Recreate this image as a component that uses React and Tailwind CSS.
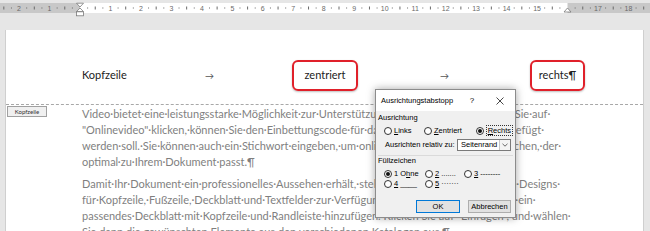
import React from 'react';

// Word ruler: origin (left indent) at x=80, 1 cm ≈ 30.47px
const CM = 30.47;
const ORIGIN = 80;

const para1 = [
  'Video·bietet·eine·leistungsstarke·Möglichkeit·zur·Unterstützung·Ihres·Standpunkts.·Wenn·Sie·auf·',
  '"Onlinevideo"·klicken,·können·Sie·den·Einbettungscode·für·das·Video·einfügen,·das·hinzugefügt·',
  'werden·soll.·Sie·können·auch·ein·Stichwort·eingeben,·um·online·nach·dem·Videoclip·zu·suchen,·der·',
  'optimal·zu·Ihrem·Dokument·passt.¶',
];
const para2 = [
  'Damit·Ihr·Dokument·ein·professionelles·Aussehen·erhält,·stellt·Word·einander·ergänzende·Designs·',
  'für·Kopfzeile,·Fußzeile,·Deckblatt·und·Textfelder·zur·Verfügung.·Beispielsweise·können·Sie·ein·',
  'passendes·Deckblatt·mit·Kopfzeile·und·Randleiste·hinzufügen.·Klicken·Sie·auf·"Einfügen",·und·wählen·',
  'Sie·dann·die·gewünschten·Elemente·aus·den·verschiedenen·Katalogen·aus.¶',
];

function Ruler() {
  const marks = [];
  for (let n = -3; n <= 19; n++) {
    const x = ORIGIN + n * CM;
    if (n !== 0 && n !== 16) {
      marks.push(<text key={'n' + n} x={x} y={10.6} textAnchor="middle">{Math.abs(n)}</text>);
    }
    marks.push(<rect key={'a' + n} x={x + CM * 0.25 - 0.5} y={7.5} width={1} height={1} />);
    marks.push(<rect key={'b' + n} x={x + CM * 0.5 - 0.5} y={6.5} width={1} height={3} />);
    marks.push(<rect key={'c' + n} x={x + CM * 0.75 - 0.5} y={7.5} width={1} height={1} />);
  }
  return (
    <svg width="650" height="18" viewBox="0 0 650 18" className="block">
      <rect x="0" y="3" width="650" height="10" fill="#fff" />
      <rect x="0" y="3" width={ORIGIN} height="10" fill="#c8c8c8" />
      <rect x={ORIGIN + 16 * CM} y="3" width="100" height="10" fill="#c8c8c8" />
      <g fill="#6a6a6a" fontSize="7" fontFamily="'Liberation Sans', sans-serif">{marks}</g>
      {/* left indent markers */}
      <g fill="#fff" stroke="#7a7a7a" strokeWidth="0.8">
        <path d="M76.5 3.2 H83.5 L80 7 Z" />
        <path d="M80 8 L83.5 11.6 H76.5 Z" />
        <rect x="76.5" y="11.8" width="7" height="4" />
        <path d="M567.5 8 L571 12 H564 Z" />
      </g>
    </svg>
  );
}

function Radio({ checked }) {
  return (
    <span className="flex h-[8px] w-[8px] shrink-0 items-center justify-center rounded-full border border-[#333] bg-white">
      {checked && <span className="h-[4px] w-[4px] rounded-full bg-[#111]" />}
    </span>
  );
}

function Option({ checked, width, children }) {
  return (
    <div className="flex items-center gap-[2px]" style={width ? { width } : undefined}>
      <Radio checked={checked} />
      <span className="whitespace-nowrap">{children}</span>
    </div>
  );
}

function Dialog() {
  return (
    <div
      className="absolute left-[375px] top-[89px] flex h-[129px] w-[141px] flex-col border border-[#8c8c8c] bg-[#f0f0f0] text-[7.5px] leading-[10px] text-black shadow-[0_0_8px_rgba(0,0,0,0.35)]"
      style={{ fontFamily: "'Liberation Sans', Arial, sans-serif" }}
    >
      <div className="flex h-[21px] shrink-0 items-center bg-white pl-[5px]">
        <span className="text-[7.5px]">Ausrichtungstabstopp</span>
        <span className="ml-auto w-[24px] text-center text-[8px]">?</span>
        <span className="ml-[4px] mr-[3px] flex w-[24px] justify-center">
          <svg width="8" height="8" viewBox="0 0 8 8">
            <path d="M0.5 0.5 L7.5 7.5 M7.5 0.5 L0.5 7.5" stroke="#333" strokeWidth="0.9" />
          </svg>
        </span>
      </div>

      <div className="flex flex-col px-[2px] pt-[2px]">
        <div className="h-[10px]">Ausrichtung</div>
        <div className="mt-[3px] flex h-[10px] items-center pl-[6px]">
          <Option width={41}><span className="underline">L</span>inks</Option>
          <Option width={53}><span className="underline">Z</span>entriert</Option>
          <Option checked>
            <span className="border border-dotted border-[#333] px-[1px]"><span className="underline">R</span>echts</span>
          </Option>
        </div>
        <div className="mt-[3px] flex h-[12px] items-center pl-[7px]">
          <span>Ausrichten relativ zu:</span>
          <div className="ml-auto mr-[2px] flex h-[12px] w-[54px] items-center border border-[#7a7a7a] bg-white">
            <span className="flex-1 pl-[3px]">Seitenrand</span>
            <span className="flex h-full w-[11px] items-center justify-center border-l border-[#c6c6c6] bg-[#f4f4f4]">
              <svg width="6" height="4" viewBox="0 0 6 4">
                <path d="M0.5 0.8 L3 3.2 L5.5 0.8" fill="none" stroke="#444" strokeWidth="0.8" />
              </svg>
            </span>
          </div>
        </div>
        <div className="mt-[4px] h-px bg-[#dadada]" />
        <div className="h-[10px]">Füllzeichen</div>
        <div className="mt-[3px] flex h-[10px] items-center pl-[6px]">
          <Option checked width={41}>1 O<span className="underline">h</span>ne</Option>
          <Option width={39}><span className="underline">2</span> .......</Option>
          <Option><span className="underline">3</span> --------</Option>
        </div>
        <div className="flex h-[10px] items-center pl-[6px]">
          <Option width={41}><span className="underline">4</span> ____</Option>
          <Option><span className="underline">5</span> ·······</Option>
        </div>
        <div className="mr-[2px] mt-[11px] flex h-[13px] justify-end gap-[8px]">
          <button type="button" className="flex w-[44px] items-center justify-center border border-[#0078d7] bg-[#e1e1e1]">OK</button>
          <button type="button" className="flex w-[43px] items-center justify-center border border-[#adadad] bg-[#e1e1e1]">Abbrechen</button>
        </div>
      </div>
    </div>
  );
}

function TabArrow() {
  return <span className="text-[9px] text-[#555]">→</span>;
}

export default function App() {
  return (
    <div
      className="relative h-[231px] w-[650px] overflow-hidden bg-[#e6e6e6]"
      style={{ fontFamily: "Lato, 'Liberation Sans', sans-serif" }}
    >
      <div className="h-[30px]">
        <Ruler />
      </div>

      <div className="flex h-[201px]">
        <div className="w-[5px] shrink-0" />
        <div className="flex-1 border-l border-r border-[#cfcfcf] bg-white">
          {/* Header */}
          <div className="mt-[30px] flex h-[31px] items-center pl-[76px] text-[11px] text-[#222]">
            <div className="w-[123px]">Kopfzeile</div>
            <div className="w-[87px]"><TabArrow /></div>
            <div className="flex h-[31px] w-[66px] items-center justify-center rounded-[6px] border-2 border-[#e0202a] shadow-[0_1px_2px_rgba(0,0,0,0.25)]">
              zentriert
            </div>
            <div className="w-[172px] pl-[82px]"><TabArrow /></div>
            <div className="flex h-[31px] w-[55px] items-center justify-center rounded-[6px] border-2 border-[#e0202a] shadow-[0_1px_2px_rgba(0,0,0,0.25)]">
              rechts¶
            </div>
          </div>

          <div className="mt-[13px] border-t border-dashed border-[#a8a8a8]" />

          {/* Body */}
          <div className="flex">
            <div className="w-[76px] shrink-0 pl-[1px] pt-[1px]">
              <div className="flex h-[11px] w-[40px] items-center justify-center border border-[#a0a0a0] bg-[#f0f0f0] text-[6px] text-[#333]">
                Kopfzeile
              </div>
            </div>
            <div className="pt-[1px] text-[11px] leading-[16px] text-[#7f7f7f]">
              <div>
                {para1.map((l) => (
                  <div key={l} className="whitespace-nowrap">{l}</div>
                ))}
              </div>
              <div className="mt-[6px]">
                {para2.map((l) => (
                  <div key={l} className="whitespace-nowrap">{l}</div>
                ))}
              </div>
            </div>
          </div>
        </div>
        <div className="w-[6px] shrink-0" />
      </div>

      <Dialog />
    </div>
  );
}
